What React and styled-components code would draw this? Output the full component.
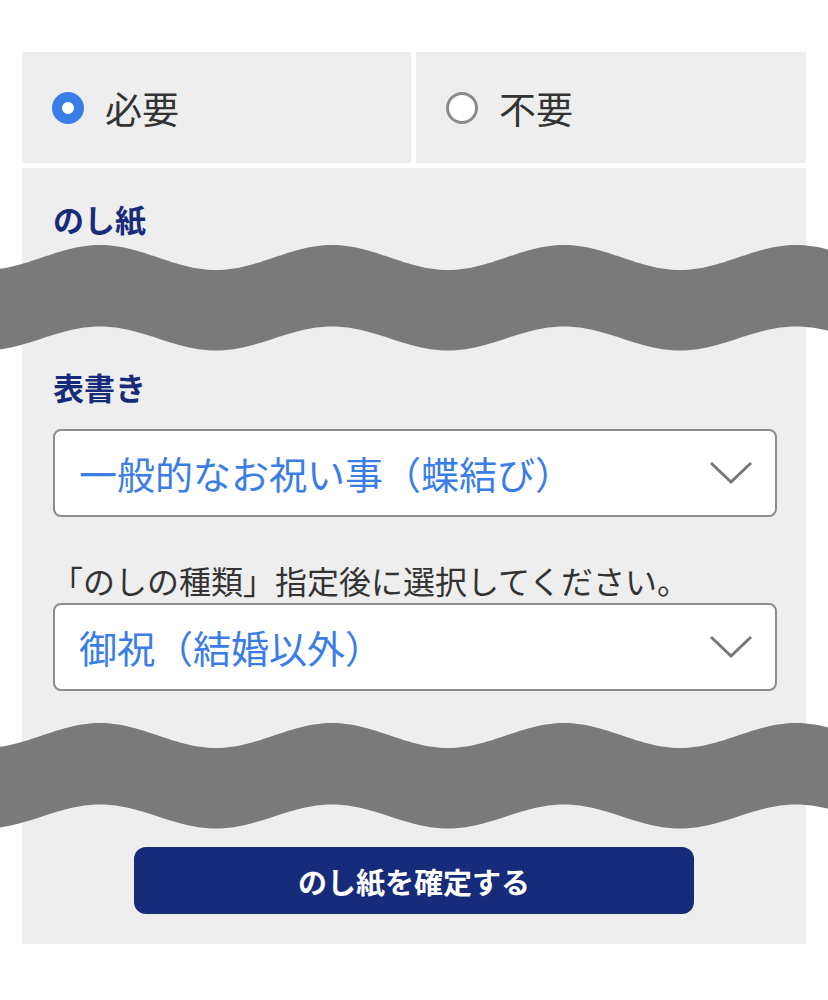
import styled, { createGlobalStyle } from 'styled-components';

const GlobalStyle = createGlobalStyle`
  html, body {
    margin: 0;
    padding: 0;
    background: #ffffff;
  }
  body {
    font-family: "Noto Sans CJK JP", "Noto Sans", sans-serif;
    color: #333333;
  }
`;

const colors = {
  panel: '#eeeeee',
  navy: '#172b7b',
  blue: '#3a7de6',
  wave: '#7a7a7a',
  border: '#8c8c8c',
};

const buildWave = () => {
  const w = 828;
  const period = 232;
  const phase = 100;
  const pts = [];
  for (let x = 0; x <= w; x += 4) {
    const c = Math.cos((2 * Math.PI * (x - phase)) / period);
    pts.push([x, 14.5 - 12.5 * c, 95.5 - 12 * c]);
  }
  const top = pts.map(([x, t], i) => `${i ? 'L' : 'M'}${x} ${t.toFixed(2)}`).join(' ');
  const bottom = pts
    .slice()
    .reverse()
    .map(([x, , b]) => `L${x} ${b.toFixed(2)}`)
    .join(' ');
  return `${top} ${bottom} Z`;
};

const wavePath = buildWave();

const Wave = ({ className }) => (
  <WaveSvg className={className} viewBox="0 0 828 110" preserveAspectRatio="none">
    <path d={wavePath} fill={colors.wave} />
  </WaveSvg>
);

const Chevron = () => (
  <ChevronSvg viewBox="0 0 44 24">
    <polyline points="2,2 22,21 42,2" fill="none" stroke="#777777" strokeWidth="3" />
  </ChevronSvg>
);

const Select = ({ value }) => (
  <SelectBox>
    <span>{value}</span>
    <Chevron />
  </SelectBox>
);

const RadioOption = ({ label, checked }) => (
  <RadioCell>
    <RadioMark $checked={checked} />
    <RadioLabel>{label}</RadioLabel>
  </RadioCell>
);

const App = () => {
  return (
    <>
      <GlobalStyle />
      <Page>
        <RadioRow>
          <RadioOption label="必要" checked />
          <RadioOption label="不要" />
        </RadioRow>
        <Panel>
          <Label>のし紙</Label>
          <FirstWave />
          <Label className="omote">表書き</Label>
          <Select value="一般的なお祝い事（蝶結び）" />
          <Hint>「のしの種類」指定後に選択してください。</Hint>
          <Select value="御祝（結婚以外）" />
          <SecondWave />
          <ConfirmButton>のし紙を確定する</ConfirmButton>
        </Panel>
      </Page>
    </>
  );
};

const Page = styled.div`
  width: 828px;
  padding: 52px 22px 56px;
  box-sizing: border-box;
`;

const RadioRow = styled.div`
  display: grid;
  grid-template-columns: 389px 1fr;
  gap: 5px;
`;

const RadioCell = styled.div`
  height: 111px;
  background: ${colors.panel};
  display: flex;
  align-items: center;
  gap: 21px;
  padding-left: 30px;
`;

const RadioMark = styled.span`
  width: 32px;
  height: 32px;
  box-sizing: border-box;
  border-radius: 50%;
  background: #ffffff;
  border: ${(p) => (p.$checked ? `10px solid ${colors.blue}` : '3px solid #8a8a8a')};
  flex-shrink: 0;
`;

const RadioLabel = styled.span`
  font-size: 37px;
  line-height: 42px;
  color: #333333;
`;

const Panel = styled.div`
  margin-top: 5px;
  background: ${colors.panel};
  padding: 31px 29px 30px 31px;
  display: flex;
  flex-direction: column;
  .omote {
    margin-top: 14px;
  }
`;

const Label = styled.div`
  font-size: 31px;
  line-height: 40px;
  font-weight: 700;
  color: ${colors.navy};
`;

const WaveSvg = styled.svg`
  display: block;
  width: 828px;
  height: 110px;
  margin: 0 -51px 0 -53px;
`;

const FirstWave = styled(Wave)`
  margin-top: 4px;
`;

const SecondWave = styled(Wave)`
  margin-top: 30px;
`;

const SelectBox = styled.div`
  margin-top: 22px;
  height: 88px;
  box-sizing: border-box;
  background: #ffffff;
  border: 2px solid ${colors.border};
  border-radius: 8px;
  display: flex;
  align-items: center;
  justify-content: space-between;
  padding: 0 22px 0 24px;
  span {
    font-size: 38px;
    line-height: 44px;
    color: ${colors.blue};
  }
`;

const ChevronSvg = styled.svg`
  width: 44px;
  height: 24px;
  flex-shrink: 0;
`;

const Hint = styled.div`
  margin-top: 43px;
  font-size: 32px;
  line-height: 40px;
  color: #333333;
  margin-left: -2px;
  & + div {
    margin-top: 3px;
  }
`;

const ConfirmButton = styled.button`
  margin: 16px 0 0 81px;
  width: 560px;
  height: 67px;
  border: none;
  border-radius: 12px;
  background: ${colors.navy};
  color: #ffffff;
  font-family: "Noto Sans CJK JP", "Noto Sans", sans-serif;
  font-size: 29px;
  font-weight: 700;
  cursor: pointer;
`;

export default App;
